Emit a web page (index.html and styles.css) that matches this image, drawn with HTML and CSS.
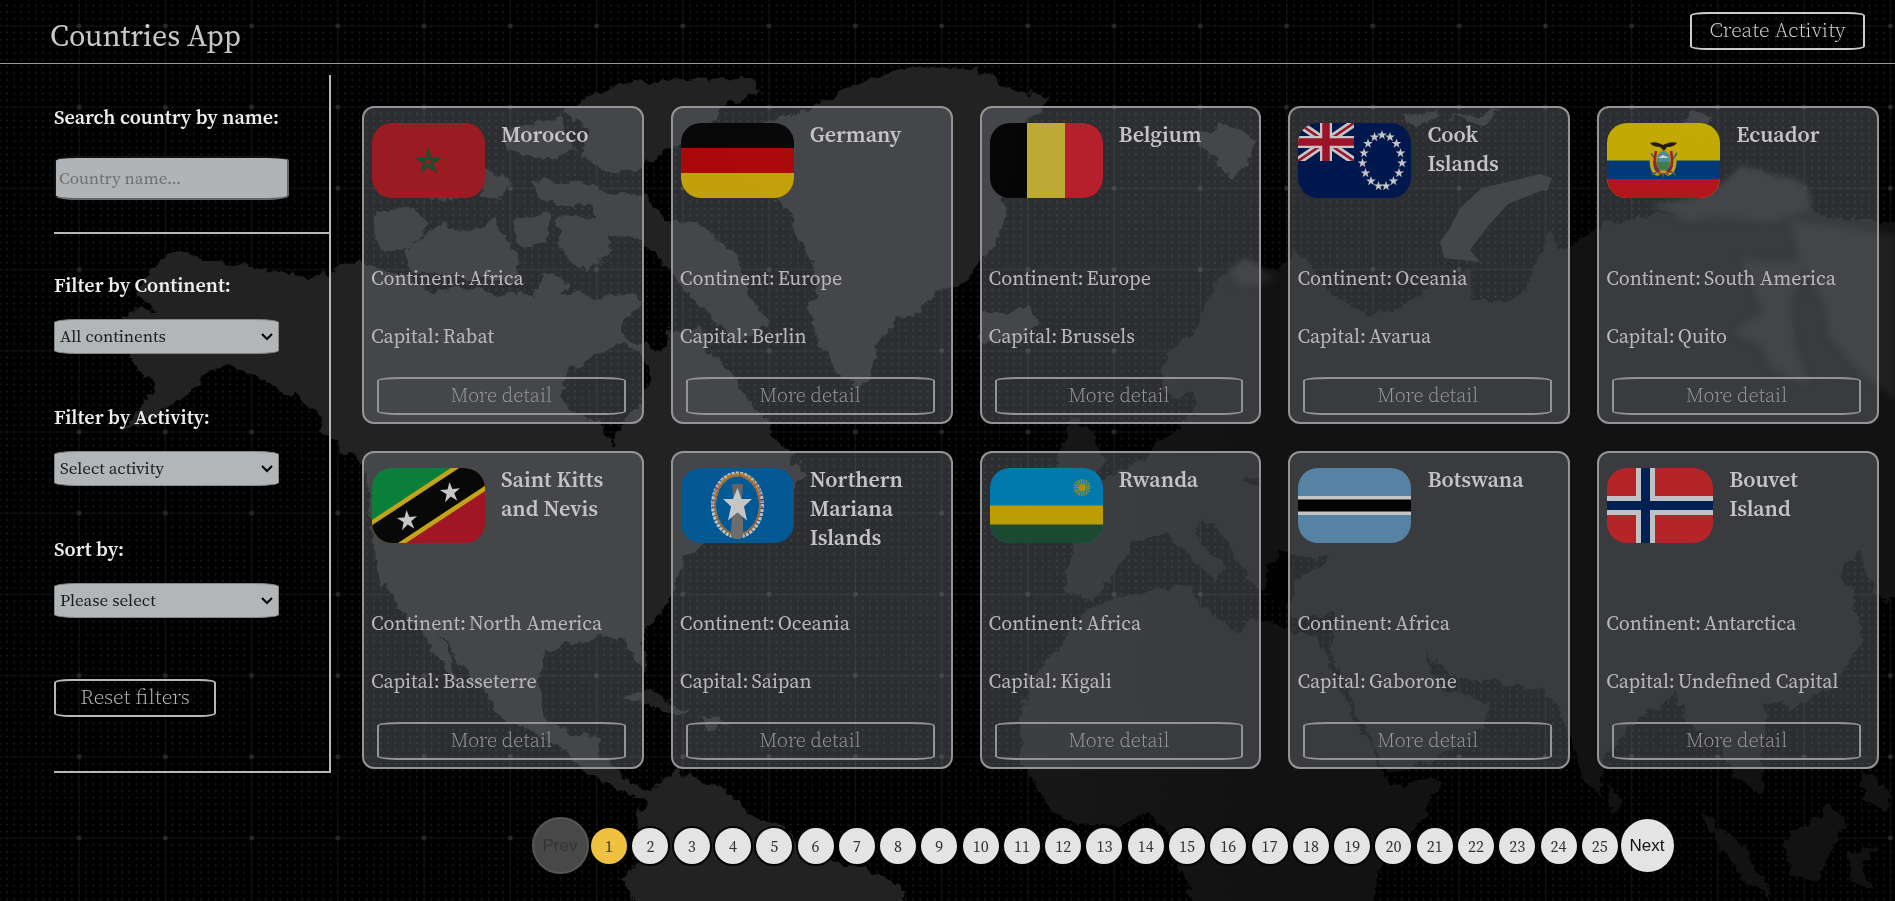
FILE: index.html
```html
<!DOCTYPE html>
<html lang="en">
<head>
<meta charset="utf-8">
<title>Countries App</title>
<link rel="stylesheet" href="styles.css">
</head>
<body>
<svg class="world" viewBox="0 0 1895 901" preserveAspectRatio="xMidYMid slice" aria-hidden="true">
  <defs>
    <pattern id="dots" x="75.4" y="103.6" width="7.19" height="6.77" patternUnits="userSpaceOnUse"><circle cx="3.6" cy="3.4" r="1.1" fill="#1b1b1b"/></pattern>
    <pattern id="grid" x="36" y="66.6" width="86.25" height="81.2" patternUnits="userSpaceOnUse">
      <path d="M43.1 0V81.2M0 40.6H86.25" stroke="#121212" stroke-width="1"/><circle cx="43.1" cy="40.6" r="2.4" fill="#2a2a2a"/>
    </pattern>
    <linearGradient id="old" x1="1040" y1="0" x2="1240" y2="0" gradientUnits="userSpaceOnUse"><stop offset="0" stop-color="#171717"/><stop offset="1" stop-color="#121212"/></linearGradient>
    <filter id="coast" x="0" y="0" width="100%" height="100%" color-interpolation-filters="sRGB"><feTurbulence type="fractalNoise" baseFrequency="0.08" numOctaves="3" seed="4"/><feDisplacementMap in="SourceGraphic" scale="14" xChannelSelector="R" yChannelSelector="G"/></filter>
    <filter id="soft" color-interpolation-filters="sRGB"><feGaussianBlur stdDeviation="3"/></filter>
  </defs>
  <rect width="1895" height="901" fill="#000"/>
  <rect width="1895" height="901" fill="url(#dots)"/>
  <rect width="1895" height="901" fill="url(#grid)"/>
  <g filter="url(#coast)">
    <g fill="#222" fill-rule="evenodd">
      <path d="M188 252L165 257 152 266 148 278 138 290 145 302 157 311 130 310 120 318 128 330 140 335 131 355 133 368 150 377 155 392 120 432 150 420 185 397 212 368 232 366 262 378 285 392 310 402 320 424 338 446 358 458 368 480 374 545 380 575 395 603 422 632 440 662 462 688 450 655 436 632 448 645 470 680 485 692 495 715 530 730 560 745 575 762 590 777 612 783 632 797 650 800 652 790 630 784 618 770 598 755 600 738 575 735 552 722 542 705 540 680 545 655 565 640 585 645 600 636 625 640 636 662 647 675 640 645 652 622 670 604 678 580 682 560 702 543 718 522 740 500 762 484 790 470 792 452 770 436 772 424 748 400 730 372 706 350 700 325 672 330 664 350 640 345 622 335 620 320 645 300 620 292 600 300 580 290 555 298 500 294 470 288 430 290 400 275 360 262 310 278 250 266 215 262ZM622 342L600 352 570 370 560 395 570 412 600 422 614 448 624 420 640 400 652 380 640 352Z"/>
      <path d="M585 98L620 84 680 79 745 78 762 92 720 108 708 130 660 152 640 170 600 172 580 152 590 130 560 112Z"/>
      <path d="M860 82L900 70 950 67 990 74 1000 86 1050 98 1040 114 1018 130 1014 170 1002 200 1006 225 985 260 960 286 935 292 920 312 892 322 876 350 868 382 855 388 835 370 818 340 808 310 820 285 810 255 797 240 788 208 760 190 722 152 745 128 800 112Z"/>
      <path d="M588 190L645 195 668 222 704 225 740 262 752 300 770 322 740 342 712 318 690 300 672 272 640 240 598 232Z"/>
      <path d="M378 212L412 208 432 222 412 248 385 252 372 232ZM405 252L440 225 470 232 495 220 520 262 516 282 470 278 410 270ZM515 220L550 212 545 245 522 248ZM555 218L600 216 612 250 590 272 565 260ZM400 180L440 170 470 178 455 200 410 196ZM480 170L510 180 500 200 482 195ZM505 130L560 118 575 150 545 160 505 148ZM530 180L600 185 590 205 540 200ZM545 270L568 285 552 310 535 296ZM670 345L700 352 695 370 672 362Z"/>
      <path d="M650 792L675 772 705 780 728 790 748 815 780 824 802 850 860 868 905 888 900 915 645 915 622 880 642 858 636 812Z"/>
      <path d="M980 312L1005 314 1030 306 1038 325 1018 342 982 344ZM1195 135L1225 124 1256 140 1250 160 1232 178 1214 160ZM1405 115L1440 112 1430 124 1405 124ZM1450 118L1500 110 1485 125ZM1690 112L1712 114 1704 140 1684 130ZM620 696L650 690 690 712 672 714 640 702ZM698 716L732 724 705 730ZM768 470L800 462 808 478 785 490Z"/>
    </g>
    <g fill="url(#old)">
      <path d="M1240 262L1215 282 1196 330 1166 355 1160 385 1175 398 1192 390 1198 410 1180 420 1176 432 1150 452 1120 472 1095 486 1062 508 1074 534 1066 588 1092 602 1112 576 1132 545 1162 532 1182 548 1216 582 1228 570 1202 545 1196 524 1214 522 1246 572 1262 594 1270 565 1292 556 1330 560 1280 590 1290 620 1334 614 1330 650 1352 700 1372 742 1390 775 1442 756 1482 728 1490 702 1440 690 1425 648 1450 676 1500 684 1545 690 1566 722 1582 775 1600 798 1606 755 1640 716 1676 695 1692 726 1718 740 1732 775 1765 795 1760 760 1768 720 1765 702 1792 706 1832 690 1862 640 1854 590 1836 572 1860 552 1880 600 1910 600 1910 224 1820 215 1800 196 1760 170 1735 170 1700 210 1650 216 1610 222 1560 250 1550 230 1520 300 1470 300 1470 268 1430 288 1400 308 1370 316 1330 290 1295 250 1280 272Z"/>
      <path d="M1085 610L1120 596 1190 584 1196 602 1240 632 1252 618 1318 636 1340 690 1370 745 1390 785 1442 780 1425 815 1382 860 1368 915 1200 915 1165 830 1150 812 1120 826 1062 822 1038 790 1018 758 1024 700 1038 668 1066 640Z"/>
      <path d="M1070 420L1092 430 1104 462 1088 477 1055 472 1062 446ZM1700 812L1748 850 1772 895 1745 882 1718 842ZM1784 842L1830 806 1846 820 1828 860 1815 882 1790 872ZM1850 850L1880 848 1862 862 1872 890 1850 880ZM1862 768L1890 790 1885 812 1862 800ZM1608 784L1622 800 1612 816ZM1860 560L1895 545 1880 570Z"/>
    </g>
    <path d="M1242 480L1262 478 1260 488ZM1272 568L1280 552 1292 560 1286 576ZM1270 572L1300 566 1288 612 1268 596Z" fill="#020202"/>
  </g>
  <path d="M1540 174L1552 178 1548 188 1508 204 1488 226 1470 250 1480 262 1444 258 1440 242 1450 228 1460 208 1482 188Z" fill="#222"/>
  <g fill="#202020" filter="url(#soft)"><path d="M1650 205C1690 200 1725 190 1740 165L1775 175C1800 178 1815 185 1810 210L1770 222C1740 222 1720 212 1690 222ZM1740 255C1770 270 1780 258 1805 262L1792 300C1790 340 1800 360 1810 385C1790 380 1765 370 1762 345L1735 335C1735 320 1762 320 1762 310ZM1790 220L1895 235 1895 400C1870 380 1850 365 1828 335C1828 300 1815 285 1800 265Z"/><path d="M1230 268L1248 258 1275 278C1265 288 1250 286 1236 285Z"/></g>
</svg>

<header class="topbar">
  <h1 class="brand">Countries App</h1>
  <button class="btn create">Create Activity</button>
</header>

<div class="layout">
  <aside class="filters">
    <section class="search">
      <label class="label" for="q">Search country by name:</label>
      <input class="field" id="q" type="text" placeholder="Country name...">
    </section>
    <section class="options">
      <div class="group"><label class="label" for="continent">Filter by Continent:</label>
        <select class="select" id="continent"><option>All continents</option></select></div>
      <div class="group"><label class="label" for="activity">Filter by Activity:</label>
        <select class="select" id="activity"><option>Select activity</option></select></div>
      <div class="group"><label class="label" for="sort">Sort by:</label>
        <select class="select" id="sort"><option>Please select</option></select></div>
      <button class="btn reset">Reset filters</button>
    </section>
  </aside>

  <main class="content">
    <div class="cards">
      <article class="card">
        <div class="head"><svg class="flag" viewBox="0 0 113 75"><rect width="113" height="75" fill="#a01b22"/><path d="M56.500 28l6.500 19.500-17-12h21l-17 12z" fill="none" stroke="#17502f" stroke-width="2.200"/></svg><h2 class="name">Morocco</h2></div>
        <p class="fact"><span>Continent:</span><span>Africa</span></p><p class="fact"><span>Capital:</span><span>Rabat</span></p><button class="btn more">More detail</button>
      </article>
      <article class="card">
        <div class="head"><svg class="flag" viewBox="0 0 113 75"><rect width="113" height="75" fill="#060606"/><path d="M0 25h113v25H0z" fill="#b00808"/><path d="M0 50h113v25H0z" fill="#c9a508"/></svg><h2 class="name">Germany</h2></div>
        <p class="fact"><span>Continent:</span><span>Europe</span></p><p class="fact"><span>Capital:</span><span>Berlin</span></p><button class="btn more">More detail</button>
      </article>
      <article class="card">
        <div class="head"><svg class="flag" viewBox="0 0 113 75"><rect width="113" height="75" fill="#040404"/><path d="M37 0h38v75H37z" fill="#c3b036"/><path d="M75 0h38v75H75z" fill="#bb202c"/></svg><h2 class="name">Belgium</h2></div>
        <p class="fact"><span>Continent:</span><span>Europe</span></p><p class="fact"><span>Capital:</span><span>Brussels</span></p><button class="btn more">More detail</button>
      </article>
      <article class="card">
        <div class="head"><svg class="flag" viewBox="0 0 113 75"><defs><path id="st" d="M0-5l1.200 3.400 3.600.1-2.900 2.200 1 3.500L0 2.100l-2.900 2.100 1-3.500-2.900-2.200 3.600-.1z"/></defs><rect width="113" height="75" fill="#001850"/><svg width="56" height="38" viewBox="0 0 56 38"><path d="M0 0l56 38M56 0L0 38" stroke="#ccc" stroke-width="8"/><path d="M0 0l56 38M56 0L0 38" stroke="#a01228" stroke-width="2.600"/><path d="M28 0v38M0 19h56" stroke="#ccc" stroke-width="12"/><path d="M28 0v38M0 19h56" stroke="#a01228" stroke-width="7.500"/></svg>
        <g fill="#ccc"><use href="#st" x="84" y="12"/><use href="#st" x="92" y="14"/><use href="#st" x="98.500" y="20.500"/><use href="#st" x="102.500" y="30"/><use href="#st" x="104" y="40"/><use href="#st" x="101" y="50"/><use href="#st" x="95.500" y="58"/><use href="#st" x="88" y="63"/><use href="#st" x="80.500" y="63"/><use href="#st" x="73" y="58"/><use href="#st" x="67.500" y="50"/><use href="#st" x="64.500" y="40"/><use href="#st" x="66" y="30"/><use href="#st" x="70" y="20.500"/><use href="#st" x="76.500" y="14"/></g></svg><h2 class="name">Cook Islands</h2></div>
        <p class="fact"><span>Continent:</span><span>Oceania</span></p><p class="fact"><span>Capital:</span><span>Avarua</span></p><button class="btn more">More detail</button>
      </article>
      <article class="card">
        <div class="head"><svg class="flag" viewBox="0 0 113 75"><rect width="113" height="75" fill="#c9ae02"/><path d="M0 37.500h113V56H0z" fill="#003a7e"/><path d="M0 56h113v19H0z" fill="#b8161c"/>
        <path d="M46 26c-3 12-2 24 5 25l5-3 5 3c7-1 8-13 6-25" fill="none" stroke="#c5a81c" stroke-width="3.500"/><path d="M44 30l4 6M70 30l-4 6M45 52l8-5M69 52l-8-5" stroke="#3c6a4c" stroke-width="1.500"/><path d="M49 28c-2 10-1 18 3 21M64 28c2 10 1 18-3 21" fill="none" stroke="#a3202a" stroke-width="2.500"/><ellipse cx="56.500" cy="38" rx="7" ry="10" fill="#4893a6" stroke="#ad8a20"/><path d="M50 39h13c0 5-3 8-6.500 8S50 44 50 39z" fill="#43804a"/><path d="M51 35l5-3 6 3z" fill="#ddd"/><path d="M43 20c5-2 9 0 13 2 4-2 9-4 14-2-3 4-8 4-10 4l-3 4-4-4c-3 0-8-1-10-4z" fill="#251b18"/><path d="M52 48l4 3 5-3 1 4-5-1-1 5-1-5-4 2z" fill="#8d5724"/></svg><h2 class="name">Ecuador</h2></div>
        <p class="fact"><span>Continent:</span><span>South America</span></p><p class="fact"><span>Capital:</span><span>Quito</span></p><button class="btn more">More detail</button>
      </article>
      <article class="card">
        <div class="head"><svg class="flag" viewBox="0 0 113 75"><path d="M0 0h113L0 75z" fill="#08823c"/><path d="M113 0v75H0z" fill="#a51524"/><path d="M-8 80L121 -5" stroke="#c9a812" stroke-width="38"/><path d="M-8 80L121 -5" stroke="#060606" stroke-width="29"/><path id="big" d="M34.500 42l2.900 7.100 7.600-.8-5.800 5 3.200 7.500-6.600-4.200-5.800 5.600 1.600-7.900-6.700-4.200 7.600-.5z" fill="#ccc"/><use href="#big" x="43" y="-28"/></svg><h2 class="name">Saint Kitts and Nevis</h2></div>
        <p class="fact"><span>Continent:</span><span>North America</span></p><p class="fact"><span>Capital:</span><span>Basseterre</span></p><button class="btn more">More detail</button>
      </article>
      <article class="card">
        <div class="head"><svg class="flag" viewBox="0 0 113 75"><rect width="113" height="75" fill="#005a98"/><ellipse cx="56.500" cy="37" rx="24" ry="31" fill="none" stroke="#c9c5c0" stroke-width="5" stroke-dasharray="3 1"/><ellipse cx="56.500" cy="37" rx="22.500" ry="29.500" fill="none" stroke="#a5672c" stroke-width="1.800"/><path d="M34 26C40 8 50 6 57 6s17 2 22 20" fill="none" stroke="#b98c35" stroke-width="2" stroke-dasharray="5 2"/><path d="M32 40c-1-8 1-18 6-24M81 40c1-8-1-18-6-24" fill="none" stroke="#8e5ba0" stroke-width="2" stroke-dasharray="2 4"/><path d="M51 16h11l-1 12 1 40q-6 5-12 0l2-40z" fill="#666"/><path d="M56.500 20l4 11h10.500l-8 7.500 3 14-9.500-8-9.500 8 3-14-8-7.500H52z" fill="#ccc"/><path d="M51 51l5.500-6 5.500 6v18q-6 4-12 0z" fill="#707070"/></svg><h2 class="name">Northern Mariana Islands</h2></div>
        <p class="fact"><span>Continent:</span><span>Oceania</span></p><p class="fact"><span>Capital:</span><span>Saipan</span></p><button class="btn more">More detail</button>
      </article>
      <article class="card">
        <div class="head"><svg class="flag" viewBox="0 0 113 75"><rect width="113" height="75" fill="#007db0"/><path d="M0 37.500h113V57H0z" fill="#c2a303"/><path d="M0 56.500h113V75H0z" fill="#1b4c32"/><circle cx="92" cy="19.500" r="5.500" fill="none" stroke="#8c9138" stroke-width="6" stroke-dasharray="1.200 .8"/><circle cx="92" cy="19.500" r="3.500" fill="#b98f0c"/></svg><h2 class="name">Rwanda</h2></div>
        <p class="fact"><span>Continent:</span><span>Africa</span></p><p class="fact"><span>Capital:</span><span>Kigali</span></p><button class="btn more">More detail</button>
      </article>
      <article class="card">
        <div class="head"><svg class="flag" viewBox="0 0 113 75"><rect width="113" height="75" fill="#5886a8"/><path d="M0 28h113v19H0z" fill="#ccc"/><path d="M0 31.500h113V43.500H0z" fill="#020202"/></svg><h2 class="name">Botswana</h2></div>
        <p class="fact"><span>Continent:</span><span>Africa</span></p><p class="fact"><span>Capital:</span><span>Gaborone</span></p><button class="btn more">More detail</button>
      </article>
      <article class="card">
        <div class="head"><svg class="flag narrow" viewBox="0 0 106 75"><rect width="106" height="75" fill="#bb2427"/><path d="M38.500 0v75M0 37.500h106" stroke="#c8c8cc" stroke-width="19"/><path d="M38.500 0v75M0 37.500h106" stroke="#002055" stroke-width="9"/></svg><h2 class="name">Bouvet Island</h2></div>
        <p class="fact"><span>Continent:</span><span>Antarctica</span></p><p class="fact"><span>Capital:</span><span>Undefined Capital</span></p><button class="btn more">More detail</button>
      </article>
    </div>

    <nav class="pager" aria-label="Pages">
      <button class="step prev" disabled>Prev</button>
      <div class="pages">
        <button class="page current">1</button><button class="page">2</button><button class="page">3</button><button class="page">4</button><button class="page">5</button><button class="page">6</button><button class="page">7</button><button class="page">8</button><button class="page">9</button><button class="page">10</button><button class="page">11</button><button class="page">12</button><button class="page">13</button><button class="page">14</button><button class="page">15</button><button class="page">16</button><button class="page">17</button><button class="page">18</button><button class="page">19</button><button class="page">20</button><button class="page">21</button><button class="page">22</button><button class="page">23</button><button class="page">24</button><button class="page">25</button>
      </div>
      <button class="step next">Next</button>
    </nav>
  </main>
</div>
</body>
</html>
```
FILE: styles.css
```css
* { box-sizing: border-box; }
body, h1, h2, p { margin: 0; }
body {
  background: #000;
  color: #b8b8b8;
  font-family: "Source Serif Pro", "Source Serif 4", "Noto Serif CJK SC", "Liberation Serif", serif;
}
.world { position: fixed; top: 0; left: 0; width: 100%; height: 100%; z-index: -1; }

.topbar {
  display: flex;
  justify-content: space-between;
  align-items: center;
  height: 64px;
  padding: 0 30px 1px 50px;
  border-bottom: 1px solid #999;
}
.brand { font-size: 30px; font-weight: 400; line-height: 40px; padding-top: 10px; color: #c8c8c8; }
.btn {
  font-family: inherit;
  font-size: 21px;
  font-weight: 300;
  line-height: 28px;
  height: 38px;
  padding: 0 0 2px;
  color: #bcbcbc;
  background: transparent;
  border: 2px solid #b8b8b8;
  border-radius: 10%;
}
.create { width: 175px; color: #d8d8d8; border-color: #ccc; }

.layout { display: flex; align-items: flex-start; padding-top: 11px; }
.filters {
  flex: none;
  width: 277px;
  margin-left: 54px;
  border-right: 2px solid #b8b8b8;
}
.search { padding: 30px 0 32px; border-bottom: 2px solid #b8b8b8; }
.options { padding: 39px 0 54px; border-bottom: 2px solid #b8b8b8; }
.label { display: block; color: #eee; font-size: 20px; font-weight: 600; line-height: 24px; }
.field {
  display: block;
  width: 235px;
  height: 44px;
  margin-top: 27px;
  padding: 0 3px;
  font: 400 17px/24px "Source Serif Pro", "Source Serif 4", "Noto Serif CJK SC", "Liberation Serif", serif;
  background: #b0b4b6;
  border: 2px inset #666;
  border-radius: 10%;
}
.field::placeholder { color: #707070; }
.group { padding-bottom: 51px; }
.select {
  display: block;
  appearance: none;
  width: 225px;
  height: 35px;
  margin-top: 22px;
  padding: 0 24px 2px 5px;
  font: 400 17px/24px "Source Serif Pro", "Source Serif 4", "Noto Serif CJK SC", "Liberation Serif", serif;
  color: #1c1c1c;
  background: #b2b6b8 url("data:image/svg+xml,%3Csvg xmlns='http://www.w3.org/2000/svg' width='12' height='8' viewBox='0 0 12 8'%3E%3Cpath d='M1 1l5 5 5-5' fill='none' stroke='%23000' stroke-width='2'/%3E%3C/svg%3E") no-repeat right 5px center;
  border: 1px solid #858585;
  border-radius: 10%;
}
.reset { display: block; width: 162px; margin-top: 10px; }

.content { flex: 1; min-width: 0; padding: 31px 16px 0 31px; }
.cards { display: grid; grid-template-columns: repeat(5, 1fr); gap: 27px; }
.card {
  padding: 15px 8px 7px;
  background: rgba(163, 167, 175, .28);
  border: 2px solid #949494;
  border-radius: 12px;
}
.head { display: flex; align-items: flex-start; gap: 16px; height: 141px; }
.flag { flex: none; width: 113px; height: 75px; border-radius: 20px; opacity: .96; }
.narrow { width: 106px; }
.name { max-width: 112px; font-size: 22px; font-weight: 600; line-height: 29px; color: #c4c4c4; margin-top: -3px; }
.fact { display: flex; gap: 3px; font-size: 20px; line-height: 29px; margin: 0 0 29px -1px; white-space: nowrap; }
.more { display: block; width: calc(100% - 13px); margin: -3px 7px 0 5px; font-size: 20px; color: #9c9c9c; border-color: #949494; }

.pager { display: flex; align-items: center; justify-content: center; padding-right: 36px; margin-top: 48px; }
.pages { display: grid; grid-template-columns: repeat(25, 1fr); flex: 0 1 1032px; justify-items: center; }
.page, .step { padding: 0; border-radius: 50%; background: #e4e4e4; }
.page {
  width: 40px;
  height: 40px;
  font: 400 16px/20px "Source Serif Pro", "Source Serif 4", "Noto Serif CJK SC", "Liberation Serif", serif;
  color: #333;
  border: 2px solid #050505;
}
.current { background: #f0c040; }
.step { flex: none; width: 53px; height: 53px; border: 0; font: 400 17px/20px "Liberation Sans", Arial, sans-serif; color: #111; }
.prev { width: 57px; height: 57px; background: #484848; color: #343434; border: 2px solid #555; }
```
